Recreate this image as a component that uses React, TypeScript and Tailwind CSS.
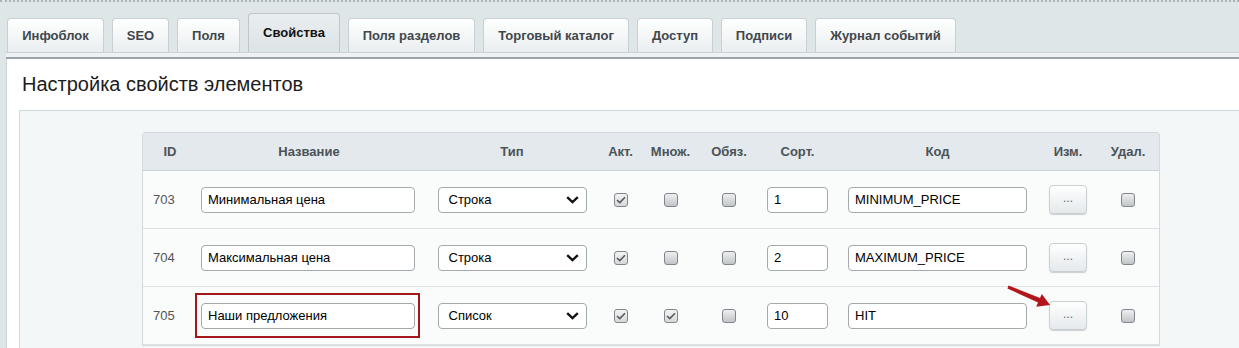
import React from 'react';

const tabs = [
  { label: 'Инфоблок', w: 'w-[97px]' },
  { label: 'SEO', w: 'w-[57px]' },
  { label: 'Поля', w: 'w-[63px]' },
  { label: 'Свойства', w: 'w-[92px]', active: true },
  { label: 'Поля разделов', w: 'w-[127px]' },
  { label: 'Торговый каталог', w: 'w-[146px]' },
  { label: 'Доступ', w: 'w-[76px]' },
  { label: 'Подписи', w: 'w-[86px]' },
  { label: 'Журнал событий', w: 'w-[141px]' },
];

const rows = [
  { id: '703', name: 'Минимальная цена', type: 'Строка', act: true, multi: false, sort: '1', code: 'MINIMUM_PRICE' },
  { id: '704', name: 'Максимальная цена', type: 'Строка', act: true, multi: false, sort: '2', code: 'MAXIMUM_PRICE' },
  { id: '705', name: 'Наши предложения', type: 'Список', act: true, multi: true, sort: '10', code: 'HIT', marked: true },
];

function Checkbox({ checked }: { checked?: boolean }) {
  return (
    <span
      className={
        'flex h-[14px] w-[14px] items-center justify-center rounded-[3px] border border-[#80878c] ' +
        (checked ? 'bg-linear-to-b from-[#f3f3f3] to-[#d6d8d9]' : 'bg-linear-to-b from-[#eeeff0] to-[#c2c5c7]')
      }
    >
      {checked && (
        <svg width="10" height="8" viewBox="0 0 10 8">
          <path d="M1 4 L3.8 6.6 L9 1.2" fill="none" stroke="#555b5f" strokeWidth="1.6" />
        </svg>
      )}
    </span>
  );
}

function TextBox({ value, w }: { value: string; w: string }) {
  return (
    <input
      defaultValue={value}
      className={w + ' h-[26px] rounded-[4px] border border-[#a3a9ad] bg-white px-[6px] text-[13px] text-black outline-none'}
    />
  );
}

export default function App() {
  return (
    <div className="relative h-[348px] w-[1239px] overflow-hidden bg-[#dfe6e8] font-['Liberation_Sans',Arial,sans-serif]">
      <div className="h-[2px] border-t-2 border-dotted border-[#a9b2b5]" />

      {/* tabs */}
      <div className="flex items-end gap-2 pl-[7px] pt-[11px]">
        {tabs.map((t) => (
          <div
            key={t.label}
            className={
              t.w +
              ' flex items-center justify-center rounded-t-[4px] border border-b-0 text-[13px] font-bold ' +
              (t.active
                ? 'h-[39px] border-[#bfc7ca] bg-linear-to-b from-[#e9eef0] to-[#dde4e6] text-[#111]'
                : 'h-[34px] border-[#c9d0d3] bg-linear-to-b from-white to-[#eaeef0] text-[#3f474c]')
            }
          >
            {t.label}
          </div>
        ))}
      </div>

      <div className="ml-[6px]">
        <div className="h-[5px] border-t border-[#cbd2d5] bg-[#eef2f3]" />
        <div className="h-[2px] bg-[#9ba4a8]" />

        <div className="border-l border-[#cdd4d7] bg-white">
          <h1 className="pl-[15px] pt-[13px] text-[20px] leading-[24px] font-normal text-[#1c1c1c]">
            Настройка свойств элементов
          </h1>

          <div className="ml-[12px] mt-[14px] h-[260px] border-t border-l border-[#d3dadd] bg-[#f4f7f8] pl-[122px] pt-[21px]">
            <div className="w-[1018px] rounded-t-[3px] border border-[#d3dadd] bg-[#fafbfb]">
              {/* header */}
              <div className="flex h-[38px] items-center border-b border-[#c8d1d5] bg-[#e3e9ec] text-[13px] font-bold text-[#4b5357]">
                <div className="w-[52px] pl-[2px] text-center">ID</div>
                <div className="w-[228px] text-center">Название</div>
                <div className="w-[178px] text-center">Тип</div>
                <div className="w-[39px] text-center">Акт.</div>
                <div className="w-[61px] text-center">Множ.</div>
                <div className="w-[56px] text-center">Обяз.</div>
                <div className="w-[81px] text-center">Сорт.</div>
                <div className="w-[199px] text-center">Код</div>
                <div className="w-[62px] text-center">Изм.</div>
                <div className="w-[58px] text-center">Удал.</div>
              </div>

              {rows.map((r) => (
                <div key={r.id} className="flex h-[58px] items-center border-b border-[#dde2e4] text-[13px]">
                  <div className="w-[52px] pl-[10px] text-[#555]">{r.id}</div>
                  <div className="flex w-[228px] items-center">
                    {r.marked ? (
                      <div className="flex h-[45px] w-[225px] items-center border-2 border-[#a3171a] pl-[4px]">
                        <TextBox value={r.name} w="w-[214px]" />
                      </div>
                    ) : (
                      <div className="pl-[6px]">
                        <TextBox value={r.name} w="w-[214px]" />
                      </div>
                    )}
                  </div>
                  <div className="flex w-[178px] justify-center">
                    <div className="flex h-[26px] w-[149px] items-center justify-between rounded-[4px] border border-[#a3a9ad] bg-white pl-[10px] pr-[7px] text-black">
                      <span>{r.type}</span>
                      <svg width="13" height="8" viewBox="0 0 13 8">
                        <path d="M1.2 1.2 L6.5 6.2 L11.8 1.2" fill="none" stroke="#111" strokeWidth="2.3" />
                      </svg>
                    </div>
                  </div>
                  <div className="flex w-[39px] justify-center">
                    <Checkbox checked={r.act} />
                  </div>
                  <div className="flex w-[61px] justify-center">
                    <Checkbox checked={r.multi} />
                  </div>
                  <div className="flex w-[56px] justify-center">
                    <Checkbox />
                  </div>
                  <div className="flex w-[81px] justify-center">
                    <TextBox value={r.sort} w="w-[61px]" />
                  </div>
                  <div className="flex w-[199px] justify-center">
                    <TextBox value={r.code} w="w-[179px]" />
                  </div>
                  <div className="flex w-[62px] justify-center">
                    <button className="flex h-[29px] w-[38px] items-center justify-center rounded-[4px] border border-[#c9cfd2] bg-linear-to-b from-white to-[#e4e9eb] pb-[4px] text-[12px] text-[#5f686d] shadow-[0_1px_1px_rgba(0,0,0,0.18)]">
                      ...
                    </button>
                  </div>
                  <div className="flex w-[58px] justify-center">
                    <Checkbox />
                  </div>
                </div>
              ))}
            </div>
          </div>
        </div>
      </div>

      {/* annotation arrow */}
      <svg className="absolute left-[1000px] top-[280px]" width="56" height="30" viewBox="0 0 56 30">
        <polygon
          points="7.4,8.4 8.6,5.6 40,18 41.8,13.9 50,25 36.2,26.7 38,22.6"
          fill="#b3171b"
        />
      </svg>
    </div>
  );
}
